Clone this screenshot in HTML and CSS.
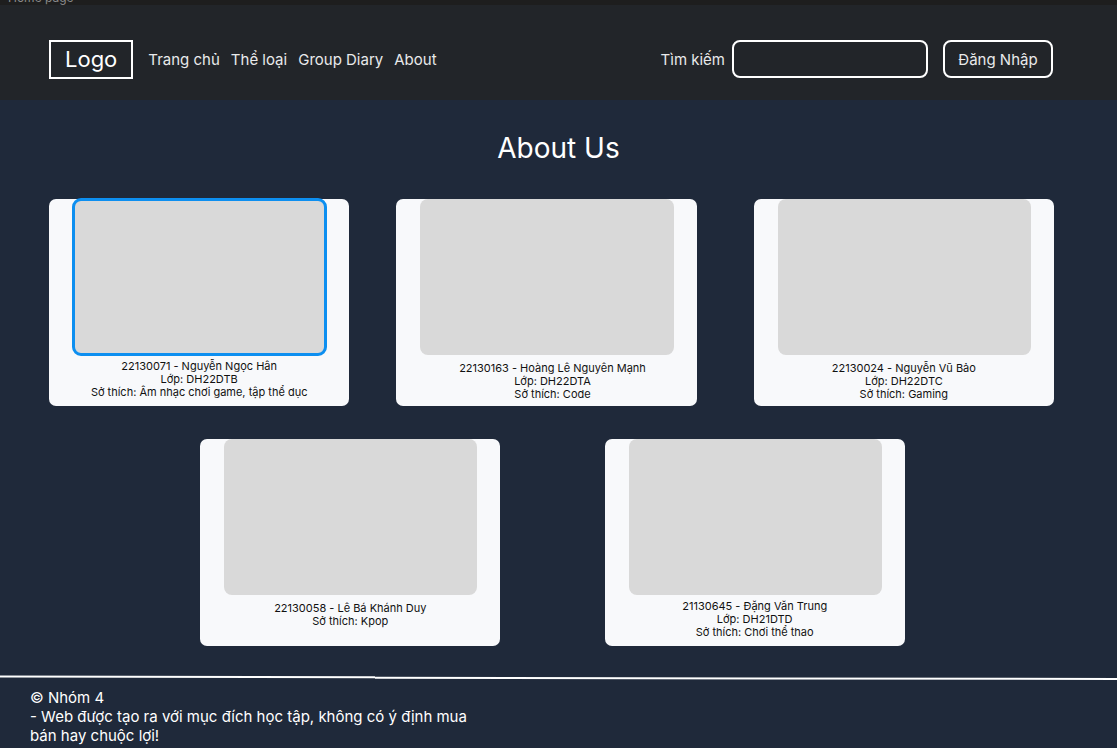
FILE: index.html
```html
<!DOCTYPE html>
<html lang="vi">
<head>
<meta charset="utf-8">
<meta name="viewport" content="width=device-width, initial-scale=1">
<title>About Us</title>
<link rel="stylesheet" href="styles.css">
</head>
<body>
<div class="frame-label"><span>Home page</span></div>
<header class="header">
  <a class="logo" href="#">Logo</a>
  <nav class="nav">
    <a href="#">Trang chủ</a>
    <a href="#">Thể loại</a>
    <a href="#">Group Diary</a>
    <a href="#">About</a>
  </nav>
  <form class="search">
    <label for="search">Tìm kiếm</label>
    <input id="search" type="text">
  </form>
  <button class="login" type="button">Đăng Nhập</button>
</header>
<main class="main">
  <h1 class="title">About Us</h1>
  <section class="row row-three">
    <article class="card">
      <div class="photo photo-selected"></div>
      <p class="caption">22130071 - Nguyễn Ngọc Hân<br>Lớp: DH22DTB<br>Sở thích: Âm nhạc chơi game, tập thể dục</p>
    </article>
    <article class="card">
      <div class="photo"></div>
      <p class="caption caption-low caption-shift">22130163 - Hoàng Lê Nguyên Mạnh<br>Lớp: DH22DTA<br>Sở thích: Code</p>
    </article>
    <article class="card">
      <div class="photo"></div>
      <p class="caption caption-low">22130024 - Nguyễn Vũ Bảo<br>Lớp: DH22DTC<br>Sở thích: Gaming</p>
    </article>
  </section>
  <section class="row row-two">
    <article class="card">
      <div class="photo"></div>
      <p class="caption caption-low">22130058 - Lê Bá Khánh Duy<br>Sở thích: Kpop</p>
    </article>
    <article class="card">
      <div class="photo"></div>
      <p class="caption">21130645 - Đặng Văn Trung<br>Lớp: DH21DTD<br>Sở thích: Chơi thể thao</p>
    </article>
  </section>
</main>
<footer class="footer">
  <svg class="rule" viewBox="0 0 1117 6" preserveAspectRatio="none" aria-hidden="true"><path d="M0 1.5 L375 2.2 M375 2.8 L1117 4" stroke="#fff" stroke-width="2" fill="none"/></svg>
  <p class="note">© Nhóm 4<br>- Web được tạo ra với mục đích học tập, không có ý định mua bán hay chuộc lợi!</p>
</footer>
</body>
</html>
```
FILE: styles.css
```css
* {
  box-sizing: border-box;
}

body {
  margin: 0;
  background: #1f293a;
  color: #fff;
  font-family: Inter, "Noto Sans", sans-serif;
  font-size: 15px;
}

.frame-label {
  display: flex;
  align-items: flex-end;
  height: 5px;
  padding: 0 0 2px 8px;
  overflow: hidden;
  background: #1e1e1e;
  color: #8a8a8a;
  font-size: 12px;
  line-height: 10px;
}

.header {
  display: flex;
  align-items: center;
  height: 95px;
  padding: 13px 64px 0 49px;
  background: #222529;
  color: #e9eaeb;
}

.header a {
  color: inherit;
  text-decoration: none;
}

.header .logo {
  padding: 5px 14px;
  border: 2px solid #fff;
  color: #fff;
  font-size: 22px;
  line-height: 25px;
}

.nav {
  display: flex;
  gap: 11px;
  margin-left: 15px;
}

.search {
  display: flex;
  align-items: center;
  gap: 7px;
  margin-left: auto;
}

.search input,
.login {
  height: 38px;
  border: 2px solid #fff;
  border-radius: 8px;
  background: transparent;
  color: inherit;
  font: inherit;
}

.search input {
  width: 196px;
  padding: 0 10px;
}

.login {
  margin-left: 15px;
  width: 110px;
  padding: 0;
}

.title {
  margin: 0;
  padding: 31px 0 33px;
  font-size: 28px;
  font-weight: 400;
  line-height: 35px;
  text-align: center;
}

.row {
  display: grid;
  padding: 0 63px 0 49px;
}

.row-three {
  grid-template-columns: 300fr 47fr 300fr 57fr 300fr;
}

.row-three .card:nth-child(2) {
  grid-column: 3;
}

.row-three .card:nth-child(3) {
  grid-column: 5;
}

.row-two {
  grid-template-columns: 151fr 300fr 104fr 300fr 149fr;
  margin-top: 33px;
}

.row-two .card:nth-child(1) {
  grid-column: 2;
}

.row-two .card:nth-child(2) {
  grid-column: 4;
}

.card {
  min-height: 207px;
  border-radius: 7px;
  background: #f8f9fb;
  color: #111;
}

.photo {
  height: 156px;
  margin: 0 23px 0 24px;
  border-radius: 8px;
  background: #d9d9d9;
}

.photo-selected {
  outline: 3px solid #0d8ff0;
  outline-offset: -2px;
}

.caption {
  margin: 0;
  padding: 5px 0 6px;
  font-size: 11px;
  line-height: 13px;
  text-align: center;
}

.caption-low {
  padding: 7px 0 4px;
}

.caption-shift {
  padding-left: 12px;
}

.footer {
  margin-top: 29px;
}

.rule {
  display: block;
  width: 100%;
  height: 6px;
}

.note {
  max-width: 480px;
  margin: 0;
  padding: 7px 0 0 30px;
  line-height: 19px;
}
```
